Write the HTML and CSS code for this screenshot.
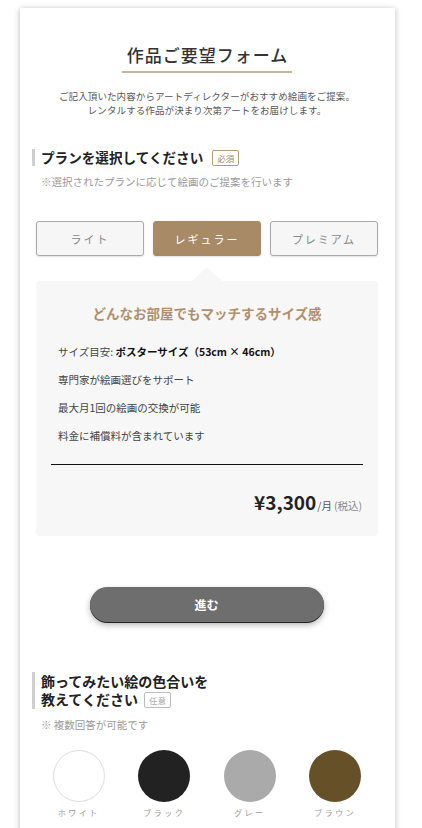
FILE: index.html
```html
<!DOCTYPE html>
<html lang="ja">
<head>
<meta charset="utf-8">
<title>作品ご要望フォーム</title>
<link rel="stylesheet" href="styles.css">
</head>
<body>
<div class="card">
  <header class="head">
    <h1 class="title">作品ご要望フォーム</h1>
    <p class="lead">ご記入頂いた内容からアートディレクターがおすすめ絵画をご提案。<br>レンタルする作品が決まり次第アートをお届けします。</p>
  </header>

  <section class="section">
    <h2 class="q-title one">プランを選択してください<span class="badge req">必須</span></h2>
    <p class="note">※選択されたプランに応じて絵画のご提案を行います</p>

    <div class="plans">
      <button class="plan">ライト</button>
      <button class="plan active">レギュラー</button>
      <button class="plan">プレミアム</button>
    </div>

    <div class="panel">
      <h3 class="panel-title">どんなお部屋でもマッチするサイズ感</h3>
      <ul class="features">
        <li>サイズ目安: <strong>ポスターサイズ（53cm × 46cm）</strong></li>
        <li>専門家が絵画選びをサポート</li>
        <li>最大月1回の絵画の交換が可能</li>
        <li>料金に補償料が含まれています</li>
      </ul>
      <div class="price"><span class="amount">¥3,300</span><span class="per">/月</span><span class="tax">(税込)</span></div>
    </div>

    <div class="go-wrap"><button class="go">進む</button></div>
  </section>

  <section class="section">
    <h2 class="q-title two">飾ってみたい絵の色合いを<br>教えてください<span class="badge opt">任意</span></h2>
    <p class="note">※ 複数回答が可能です</p>
    <div class="colors">
      <div class="color"><span class="dot white"></span><span class="cname">ホワイト</span></div>
      <div class="color"><span class="dot black"></span><span class="cname">ブラック</span></div>
      <div class="color"><span class="dot gray"></span><span class="cname">グレー</span></div>
      <div class="color"><span class="dot brown"></span><span class="cname">ブラウン</span></div>
    </div>
  </section>
</div>
</body>
</html>
```
FILE: styles.css
```css
* { box-sizing: border-box; }
html, body { margin: 0; padding: 0; background: #fff; }
body {
  font-family: "Noto Sans CJK JP", "Noto Sans", sans-serif;
  color: #333;
}
.card {
  width: 375px;
  margin: 8px 0 0 20px;
  padding: 35px 17px 40px 16px;
  background: #fff;
  box-shadow: 0 1px 6px rgba(0,0,0,0.28);
  min-height: 900px;
}
.head { text-align: center; }
.title {
  display: inline-block;
  margin: 0;
  padding: 0 4px 5px 5px;
  font-size: 17px;
  line-height: 22px;
  font-weight: 500;
  letter-spacing: 1px;
  color: #333;
  border-bottom: 2px solid #c6b69c;
}
.lead {
  margin: 16px 0 0;
  font-size: 9.5px;
  line-height: 14px;
  letter-spacing: 0.1px;
  color: #555;
}
.section { margin-top: 32px; }
.q-title {
  margin: 0 0 0 -4px;
  padding-left: 6px;
  border-left: 3px solid #cfcfcf;
  font-size: 14px;
  line-height: 17px;
  font-weight: 700;
  color: #222;
}
.q-title.one { font-size: 13.6px; }
.q-title.two { line-height: 18px; padding-bottom: 1px; }
.badge {
  display: inline-block;
  vertical-align: 1px;
  margin-left: 6px;
  padding: 0 4px;
  font-size: 8.5px;
  line-height: 14px;
  font-weight: 400;
  border-radius: 2px;
}
.one .badge { margin-left: 9px; }
.badge.req { border: 1px solid #b39d70; color: #a08a62; }
.badge.opt { border: 1px solid #bbb; color: #aaa; }
.note {
  margin: 8px 0 0 5px;
  font-size: 10.5px;
  line-height: 16px;
  color: #9a9a9a;
}
.plans {
  margin-top: 31px;
  display: grid;
  grid-template-columns: repeat(3, 1fr);
  gap: 9px;
}
.plan {
  height: 35px;
  border: 1px solid #aaa;
  border-radius: 3px;
  background: #f6f6f6;
  color: #888;
  font-family: inherit;
  font-size: 11px;
  letter-spacing: 2px;
  box-shadow: 0 1px 2px rgba(0,0,0,0.12);
  padding: 0;
}
.plan.active {
  background: #a88a66;
  border-color: #a88a66;
  color: #fff;
}
.panel {
  position: relative;
  margin-top: 25px;
  padding: 22px 15px 18px 15px;
  background: #f7f7f7;
  border-radius: 4px;
}
.panel::before {
  content: "";
  position: absolute;
  top: -14px;
  left: 50%;
  margin-left: -15px;
  border-left: 15px solid transparent;
  border-right: 15px solid transparent;
  border-bottom: 14px solid #f7f7f7;
}
.panel-title {
  margin: 0;
  text-align: center;
  font-size: 13.5px;
  line-height: 20px;
  font-weight: 700;
  color: #b0906c;
}
.features {
  list-style: none;
  margin: 21px 0 0;
  padding: 0 0 20px 7px;
  border-bottom: 1px solid #111;
}
.features li {
  font-size: 10.5px;
  line-height: 16px;
  color: #444;
  margin-top: 12px;
}
.features li:first-child { margin-top: 0; }
.features strong { color: #111; font-weight: 700; }
.price {
  margin-top: 25px;
  text-align: right;
  padding-right: 1px;
  line-height: 24px;
}
.amount { font-size: 19px; font-weight: 700; color: #222; }
.per { font-size: 10.5px; color: #555; margin-left: 1px; }
.tax { font-size: 10.5px; color: #888; margin-left: 2px; }
.go-wrap { margin-top: 51px; text-align: center; }
.go {
  width: 234px;
  height: 35px;
  border: none;
  border-radius: 18px;
  background: #6e6e6e;
  color: #fff;
  font-family: inherit;
  font-size: 12px;
  font-weight: 700;
  box-shadow: 0 1px 0 #222, 0 3px 6px rgba(0,0,0,0.3);
  margin-left: -1px;
}
.section + .section { margin-top: 50px; }
.colors {
  margin-top: 17px;
  display: grid;
  grid-template-columns: repeat(4, 1fr);
}
.color {
  display: flex;
  flex-direction: column;
  align-items: center;
}
.dot {
  width: 52px;
  height: 52px;
  border-radius: 50%;
}
.dot.white { background: #fff; border: 1px solid #ddd; }
.dot.black { background: #222; }
.dot.gray { background: #aaa; }
.dot.brown { background: #665028; }
.cname {
  margin-top: 4px;
  font-size: 8px;
  line-height: 14px;
  letter-spacing: 2.5px;
  color: #999;
}
```
